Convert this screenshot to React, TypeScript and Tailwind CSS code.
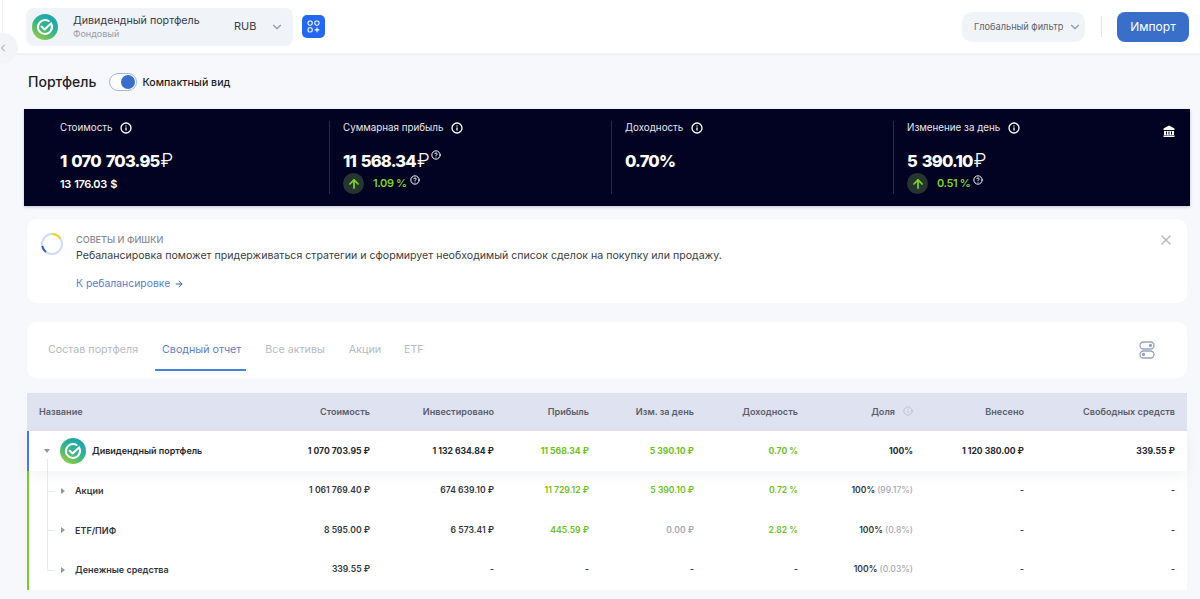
import React from "react";
import { ArrowRight, ChevronDown, ChevronLeft, X, ArrowUp, Info, CircleHelp } from "lucide-react";

const FONT = "font-['Inter','Liberation_Sans',sans-serif]";

// Sber-like round logo
const Logo = ({ size }: { size: number }) => (
  <svg width={size} height={size} viewBox="0 0 26 26">
    <defs>
      <linearGradient id={`lg${size}`} x1="0.8" y1="0" x2="0.2" y2="1">
        <stop offset="0" stopColor="#1aa3b8" />
        <stop offset="0.5" stopColor="#33b58a" />
        <stop offset="1" stopColor="#9bcc3e" />
      </linearGradient>
    </defs>
    <circle cx="13" cy="13" r="13" fill={`url(#lg${size})`} />
    <path d="M19.4 10.2A7 7 0 1 1 16.6 7" fill="none" stroke="#fff" strokeWidth="2" strokeLinecap="round" />
    <path d="M9.6 12.6l3 2.8 6.6-6.2" fill="none" stroke="#fff" strokeWidth="2" strokeLinecap="round" strokeLinejoin="round" />
  </svg>
);

interface StatProps {
  label: string;
  value: string;
  unit?: string;
  help?: boolean;
  sub?: string;
  pct?: string;
  first?: boolean;
}

const Stat = ({ label, value, unit, help, sub, pct, first }: StatProps) => (
  <div className={first ? "w-[269px] shrink-0" : "w-[282px] shrink-0 border-l border-[#2a2c44] pl-[13px]"}>
    <div className="flex items-center gap-[8px] h-[14px] text-[9.8px] text-[#e6e7ee]">
      {label}
      <Info size={12} strokeWidth={2.6} className="text-white" />
    </div>
    <div className="flex items-start mt-[14px] h-[24px] text-[16.5px] leading-[24px] font-extrabold text-white tracking-[-0.8px] [word-spacing:2px]">
      {value}
      {unit && <span className="font-light text-[19px] ml-[1px]">{unit}</span>}
      {help && <CircleHelp size={10} strokeWidth={2.4} className="ml-[2px] mt-[1px]" />}
    </div>
    {sub && <div className="mt-[3px] text-[11px] leading-[16px] font-semibold text-white tracking-[-0.4px] [word-spacing:1px]">{sub}</div>}
    {pct && (
      <div className="flex items-center h-[21px]">
        <span className="flex items-center justify-center w-[21px] h-[21px] rounded-full bg-[#26352f]">
          <ArrowUp size={14} strokeWidth={3} className="text-[#7ed321]" />
        </span>
        <span className="ml-[9px] text-[11px] font-semibold text-[#7ed321] tracking-[-0.4px]">{pct}</span>
        <CircleHelp size={10} strokeWidth={2.4} className="ml-[3px] mb-[8px] text-white" />
      </div>
    )}
  </div>
);

// Bordered rows lose 2px to the left border, so the name column is 2px narrower there
const COLS = "grid grid-cols-[203px_140px_124px_95px_105px_104px_115px_111px_151px] items-center pr-3";
const COLS_BORDERED = "grid grid-cols-[201px_140px_124px_95px_105px_104px_115px_111px_151px] items-center pr-3";
const GREEN = "text-[#6cc024]";

const Cell = ({ children, className = "" }: { children: React.ReactNode; className?: string }) => (
  <div className={`text-right whitespace-nowrap ${className}`}>{children}</div>
);

const rows = [
  {
    name: "Акции",
    vals: ["1 061 769.40 ₽", "674 639.10 ₽", "11 729.12 ₽", "5 390.10 ₽", "0.72 %"],
    share: "(99.17%)",
    chg: GREEN,
  },
  {
    name: "ETF/ПИФ",
    vals: ["8 595.00 ₽", "6 573.41 ₽", "445.59 ₽", "0.00 ₽", "2.82 %"],
    share: "(0.8%)",
    chg: "text-[#a3a8b8]",
  },
  {
    name: "Денежные средства",
    vals: ["339.55 ₽", "-", "-", "-", "-"],
    share: "(0.03%)",
    chg: "text-[#33363f]",
  },
];

export default function App() {
  return (
    <div className={`${FONT} relative w-[1200px] h-[599px] overflow-hidden bg-[#f7f8fb] text-[#22242c]`}>
      {/* collapse handle */}
      <div className="absolute left-[2px] top-0 z-10 w-px h-[54px] bg-[#eef0f3]" />
      <div className="absolute left-[-12px] top-[33px] z-10 flex items-center justify-end w-[30px] h-[30px] pr-[9px] rounded-full bg-[#f3f4f6]">
        <ChevronLeft size={12} strokeWidth={2} className="text-[#8d97ad]" />
      </div>

      {/* top bar */}
      <header className="flex items-center h-[55px] pl-[26px] pr-[11px] bg-white border-b-2 border-[#eef0f3]">
        <div className="flex items-center w-[267px] h-[38px] pl-[6px] rounded-[8px] bg-[#f0f3f8]">
          <Logo size={26} />
          <div className="ml-[15px] w-[161px]">
            <div className="text-[10.7px] leading-[14px] text-[#3a3d4a]">Дивидендный портфель</div>
            <div className="text-[9px] leading-[12px] text-[#989dab]">Фондовый</div>
          </div>
          <span className="text-[11px] text-[#3a3d4a]">RUB</span>
          <ChevronDown size={14} className="ml-[14px] text-[#8d97ad]" />
        </div>
        <div className="flex items-center justify-center w-[23px] h-[23px] ml-[9px] rounded-[5px] bg-[#2468f2]">
          <svg width="13" height="13" viewBox="0 0 13 13" fill="none" stroke="#fff" strokeWidth="1.1">
            <rect x="1" y="1" width="4.2" height="4.2" rx="1.6" />
            <rect x="7.8" y="1" width="4.2" height="4.2" rx="1.6" />
            <rect x="1" y="7.8" width="4.2" height="4.2" rx="1.6" />
            <path d="M10 7.6v4.6M7.7 9.9h4.6" />
          </svg>
        </div>
        <div className="flex items-center justify-between w-[123px] h-[30px] ml-auto pl-[12px] pr-[2px] rounded-[10px] bg-[#f0f3f8]">
          <span className="whitespace-nowrap text-[9.2px] text-[#60636f]">Глобальный фильтр</span>
          <ChevronDown size={14} className="mr-[1px] text-[#8d97ad]" />
        </div>
        <div className="w-px h-[21px] ml-[16px] mr-[15px] bg-[#dfe3ea]" />
        <button className="w-[72px] h-[30px] rounded-[8px] bg-[#3a6fc9] text-[12px] text-white">Импорт</button>
      </header>

      <main>
        {/* title row */}
        <div className="flex items-center h-[54px] pl-[28px]">
          <h1 className="mb-[2px] text-[14px] font-medium text-[#1c1e26]">Портфель</h1>
          <div className="flex items-center justify-end w-[28px] h-[18px] ml-[13px] pr-[1px] rounded-full border border-[#9db8e8] bg-white">
            <span className="w-[14px] h-[14px] rounded-full bg-[#3a6fc9]" />
          </div>
          <span className="ml-[5px] mt-[1px] text-[10.6px] font-medium text-[#1c1e26]">Компактный вид</span>
        </div>

        {/* dark summary */}
        <section className="relative flex ml-[24px] w-[1166px] h-[97px] pl-[36px] py-[12px] bg-[#020323] shadow-[0_1px_3px_rgba(0,0,0,0.2)]">
          <Stat first label="Стоимость" value="1 070 703.95" unit="₽" sub="13 176.03 $" />
          <Stat label="Суммарная прибыль" value="11 568.34" unit="₽" help pct="1.09 %" />
          <Stat label="Доходность" value="0.70%" />
          <Stat label="Изменение за день" value="5 390.10" unit="₽" pct="0.51 %" />
          <svg width="12" height="12" viewBox="0 0 12 12" fill="#fff" className="absolute right-[15px] top-[16px]">
            <path d="M6 0.5 11.5 3.6V5H0.5V3.6Z" />
            <path d="M1 6h10v4H1z" />
            <path d="M0.5 10.5h11V12H0.5z" />
            <path d="M3 6.5h1v3H3zM5.5 6.5h1v3h-1zM8 6.5h1v3H8z" fill="#020323" />
          </svg>
        </section>

        {/* tips */}
        <section className="relative flex mt-[13px] ml-[27px] w-[1160px] h-[84px] pl-[13px] pt-[12px] rounded-[10px] bg-white">
          <svg width="24" height="24" viewBox="0 0 24 24" fill="none" strokeWidth="2" className="mt-[1px]">
            <circle cx="12" cy="12" r="10" stroke="#cfdcf7" />
            <path d="M12 2a10 10 0 0 1 8.4 4.6" stroke="#f2d21f" />
            <path d="M2.2 14a10 10 0 0 0 3.8 6" stroke="#2f62b8" />
          </svg>
          <div className="ml-[12px]">
            <div className="mt-[2px] text-[9.1px] leading-[14px] font-medium text-[#85888f]">СОВЕТЫ И ФИШКИ</div>
            <p className="mt-[1px] text-[10.6px] leading-[16px] text-[#3b3d45]">
              Ребалансировка поможет придерживаться стратегии и сформирует необходимый список сделок на покупку или продажу.
            </p>
            <a className="flex items-center mt-[12px] text-[10.4px] leading-[16px] text-[#5680cc]">
              К ребалансировке
              <ArrowRight size={10} strokeWidth={2.4} className="ml-[4px] text-[#2f62b8]" />
            </a>
          </div>
          <X size={16} strokeWidth={2.2} className="absolute right-[13px] top-[13px] text-[#b4b8c2]" />
        </section>

        {/* tabs */}
        <section className="flex items-stretch mt-[19px] ml-[27px] w-[1160px] h-[56px] pl-[15px] rounded-[10px] bg-white text-[10.7px] text-[#b7bac2]">
          <span className="flex items-center px-[6px]">Состав портфеля</span>
          <span className="flex items-center self-start ml-[11px] pl-[7px] pr-[5px] pt-[9px] h-[49px] border-b-2 border-[#3f88d8] text-[#5b80cc]">Сводный отчет</span>
          <span className="flex items-center ml-[12px] px-[7px]">Все активы</span>
          <span className="flex items-center ml-[10px] px-[7px]">Акции</span>
          <span className="flex items-center ml-[9px] px-[7px]">ETF</span>
          <svg width="16" height="18" viewBox="0 0 16 18" fill="none" stroke="#96a2bf" strokeWidth="1.3" className="self-center ml-auto mr-[32px]">
            <rect x="1" y="1" width="14" height="7" rx="3.5" />
            <rect x="1" y="10" width="14" height="7" rx="3.5" />
            <circle cx="11.5" cy="4.5" r="1" fill="#96a2bf" />
            <circle cx="4.5" cy="13.5" r="1" fill="#96a2bf" />
          </svg>
        </section>

        {/* table */}
        <section className="mt-[15px] ml-[27px] w-[1160px]">
          <div className={`${COLS} h-[38px] bg-[#dfe2f0] text-[9.1px] font-semibold text-[#5b5e6b]`}>
            <div className="pl-[12px]">Название</div>
            <Cell>Стоимость</Cell>
            <Cell>Инвестировано</Cell>
            <Cell>Прибыль</Cell>
            <Cell>Изм. за день</Cell>
            <Cell>Доходность</Cell>
            <Cell className="relative pr-[18px]">
              Доля
              <Info size={10} strokeWidth={1.4} className="absolute right-0 top-[1px] text-[#a9adbd]" />
            </Cell>
            <Cell>Внесено</Cell>
            <Cell>Свободных средств</Cell>
          </div>

          <div className={`${COLS_BORDERED} relative z-10 h-[40px] bg-white border-l-2 border-[#4b78d0] text-[8.6px] font-bold text-[#26282f] shadow-[0_4px_12px_rgba(40,50,90,0.06)]`}>
            <div className="flex items-center pl-[15px]">
              <span className="w-0 h-0 border-x-[3px] border-x-transparent border-t-[4px] border-t-[#8d97ad]" />
              <span className="ml-[10px]"><Logo size={26} /></span>
              <span className="ml-[6px] text-[9px] font-semibold whitespace-nowrap">Дивидендный портфель</span>
            </div>
            <Cell>1 070 703.95 ₽</Cell>
            <Cell>1 132 634.84 ₽</Cell>
            <Cell className={GREEN}>11 568.34 ₽</Cell>
            <Cell className={GREEN}>5 390.10 ₽</Cell>
            <Cell className={GREEN}>0.70 %</Cell>
            <Cell>100%</Cell>
            <Cell>1 120 380.00 ₽</Cell>
            <Cell>339.55 ₽</Cell>
          </div>

          <div className="relative bg-white border-l-2 border-[#7cc832]">
            {/* tree connector */}
            <div className="absolute z-20 left-[18px] top-[-12px] h-[110px] w-px bg-[#e6e8ee]" />
            {rows.map((r) => (
              <div key={r.name} className={`${COLS_BORDERED} h-[39.5px] text-[8.6px] font-semibold text-[#33363f]`}>
                <div className="relative flex items-center pl-[32px] text-[9px]">
                  <span className="absolute left-[18px] top-1/2 w-[8px] h-px bg-[#e6e8ee]" />
                  <span className="w-0 h-0 border-y-[3px] border-y-transparent border-l-[4px] border-l-[#8d97ad]" />
                  <span className="ml-[10px]">{r.name}</span>
                </div>
                <Cell>{r.vals[0]}</Cell>
                <Cell>{r.vals[1]}</Cell>
                <Cell className={r.vals[2] === "-" ? "" : GREEN}>{r.vals[2]}</Cell>
                <Cell className={r.chg}>{r.vals[3]}</Cell>
                <Cell className={r.vals[4] === "-" ? "" : GREEN}>{r.vals[4]}</Cell>
                <Cell>
                  100% <span className="font-medium text-[#a3a8b8]">{r.share}</span>
                </Cell>
                <Cell>-</Cell>
                <Cell>-</Cell>
              </div>
            ))}
          </div>
        </section>
      </main>
    </div>
  );
}
